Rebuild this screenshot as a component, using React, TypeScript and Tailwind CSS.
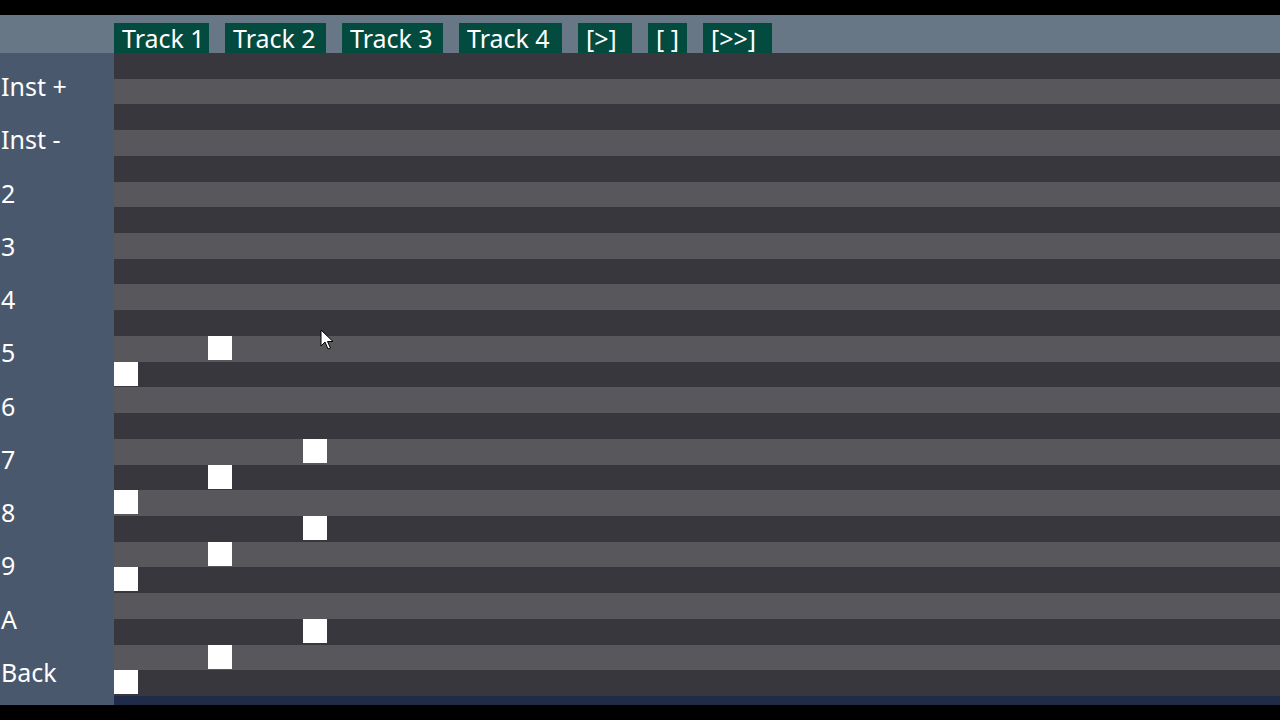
import React from "react";

// label and button width of each transport/track tab
const TABS: [string, number][] = [
  ["Track 1", 95],
  ["Track 2", 101],
  ["Track 3", 101],
  ["Track 4", 103],
  ["[>]", 54],
  ["[ ]", 39],
  ["[>>]", 69],
];
const LABELS = ["Inst +", "Inst -", "2", "3", "4", "5", "6", "7", "8", "9", "A", "Back"];

// [row, column] of every note on the sequencer grid
const NOTES: [number, number][] = [
  [11, 1],
  [12, 0],
  [15, 2],
  [16, 1],
  [17, 0],
  [18, 2],
  [19, 1],
  [20, 0],
  [22, 2],
  [23, 1],
  [24, 0],
];

const ROWS = 25;
const COLS = 12;

function Cursor() {
  return (
    <svg
      className="absolute left-[320px] top-[329px] pointer-events-none"
      width="14"
      height="22"
      viewBox="0 0 14 22"
    >
      <path
        d="M1 1 L1 17 L5 13 L8 20 L10.5 19 L7.5 12.5 L13 12.5 Z"
        fill="white"
        stroke="black"
        strokeWidth="1"
        strokeLinejoin="round"
      />
    </svg>
  );
}

export default function App() {
  const noteAt = (r: number, c: number) =>
    NOTES.some(([nr, nc]) => nr === r && nc === c);

  return (
    <div
      className="relative w-[1280px] h-[720px] bg-black flex flex-col overflow-hidden text-white"
      style={{ fontFamily: '"Noto Sans", "Open Sans", sans-serif' }}
    >
      <div className="h-[15px]" />

      {/* transport / track bar */}
      <div className="h-[38px] bg-[#687786] flex items-end pl-[114px] gap-[16px]">
        {TABS.map(([t, w]) => (
          <div
            key={t}
            className="h-[30px] bg-[#034a3f] pl-[8px] text-[25px] leading-[30px] whitespace-pre"
            style={{ width: w }}
          >
            {t}
          </div>
        ))}
      </div>

      <div className="flex h-[652px]">
        {/* instrument / octave buttons */}
        <div className="w-[114px] bg-[#4a586d] flex flex-col pt-[17px] overflow-hidden">
          {LABELS.map((l) => (
            <div
              key={l}
              className="h-[53.27px] shrink-0 pl-[1px] text-[25px] leading-[32px] whitespace-pre"
            >
              {l}
            </div>
          ))}
        </div>

        {/* pattern grid */}
        <div className="flex-1 flex flex-col">
          <div className="flex flex-col">
            {Array.from({ length: ROWS }).map((_, r) => (
              <div
                key={r}
                className={
                  "h-[25.72px] flex " +
                  (r % 2 === 0 ? "bg-[#38373d]" : "bg-[#58575c]")
                }
              >
                {Array.from({ length: COLS }).map((_, c) => (
                  <div key={c} className="w-[94.4px] h-full shrink-0">
                    {noteAt(r, c) && <div className="w-[24px] h-[24px] bg-white" />}
                  </div>
                ))}
              </div>
            ))}
          </div>
          <div className="flex-1 bg-[#1f2b48]" />
        </div>
      </div>

      <Cursor />
    </div>
  );
}
